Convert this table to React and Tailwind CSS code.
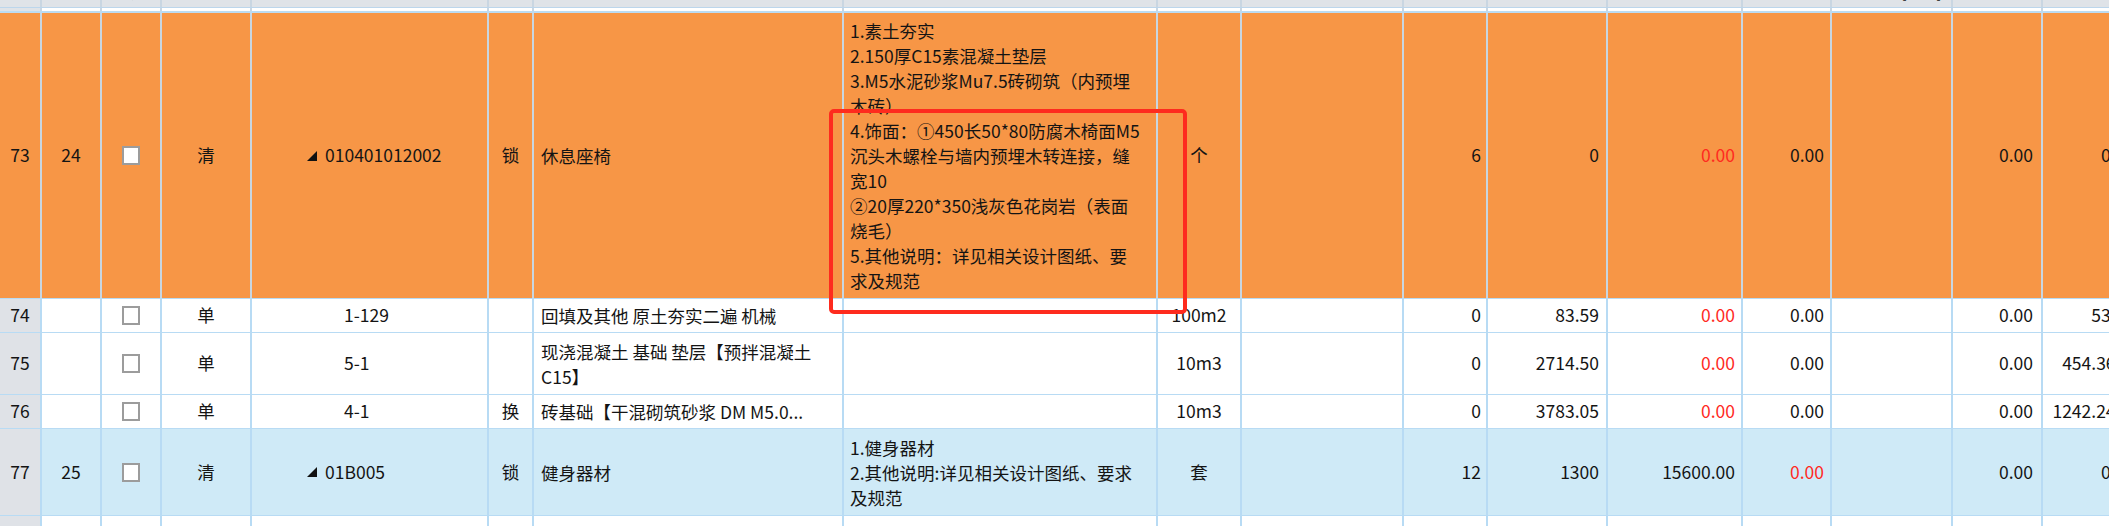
import React from 'react';

const GRID =
  'grid grid-cols-[42px_60px_60px_90px_237px_45px_310px_314px_84px_162px_84px_120px_135px_89px_121px_90px_100px]';

const FONT = { fontFamily: '"Noto Sans CJK SC", "Noto Sans", sans-serif' };

const headers = [
  '', '序号', '锁定', '类别', '编码', '', '名称', '项目特征', '单位', '工程量表达式',
  '工程量', '单价', '合价', '综合单价', '取费专业[费率]', '综合合价', '人工费',
];

const Triangle = () => (
  <svg width="10" height="10" viewBox="0 0 10 10" className="mr-2 shrink-0">
    <polygon points="10,0 10,10 0,10" fill="#111" />
  </svg>
);

const Checkbox = () => (
  <div className="w-[18px] h-[19px] border-2 border-[#9c9c9c] bg-white" />
);

const Lines = ({ lines }) => (
  <div className="flex flex-col">
    {lines.map((l, i) => (
      <div key={i} className="whitespace-nowrap leading-[25px]">{l}</div>
    ))}
  </div>
);

const rows = [
  {
    no: '73', idx: '24', type: '清', code: '010401012002', parent: true, lock: '锁',
    name: ['休息座椅'],
    desc: [
      '1.素土夯实',
      '2.150厚C15素混凝土垫层',
      '3.M5水泥砂浆Mu7.5砖砌筑（内预埋',
      '木砖）',
      '4.饰面：①450长50*80防腐木椅面M5',
      '沉头木螺栓与墙内预埋木转连接，缝',
      '宽10',
      '②20厚220*350浅灰色花岗岩（表面',
      '烧毛）',
      '5.其他说明：详见相关设计图纸、要',
      '求及规范',
    ],
    unit: '个', qty: '6', price: '0', total: '0.00', totalRed: true, c13: '0.00', c13Red: false,
    c15: '0.00', c16: '0.00', h: 'h-[286px]', bg: 'bg-[#f79646]', noBg: 'bg-[#f79646]',
    line: 'border-[#c8d6e1]',
  },
  {
    no: '74', idx: '', type: '单', code: '1-129', parent: false, lock: '',
    name: ['回填及其他 原土夯实二遍 机械'], desc: [],
    unit: '100m2', qty: '0', price: '83.59', total: '0.00', totalRed: true, c13: '0.00',
    c15: '0.00', c16: '53.80', h: 'h-[34px]', bg: 'bg-white', noBg: 'bg-[#dfe2e7]',
    line: 'border-[#b8dbf4]',
  },
  {
    no: '75', idx: '', type: '单', code: '5-1', parent: false, lock: '',
    name: ['现浇混凝土 基础 垫层【预拌混凝土', 'C15】'], desc: [],
    unit: '10m3', qty: '0', price: '2714.50', total: '0.00', totalRed: true, c13: '0.00',
    c15: '0.00', c16: '454.3600', h: 'h-[62px]', bg: 'bg-white', noBg: 'bg-[#dfe2e7]',
    line: 'border-[#b8dbf4]',
  },
  {
    no: '76', idx: '', type: '单', code: '4-1', parent: false, lock: '换',
    name: ['砖基础【干混砌筑砂浆 DM M5.0...'], desc: [],
    unit: '10m3', qty: '0', price: '3783.05', total: '0.00', totalRed: true, c13: '0.00',
    c15: '0.00', c16: '1242.2400', h: 'h-[34px]', bg: 'bg-white', noBg: 'bg-[#dfe2e7]',
    line: 'border-[#b8dbf4]',
  },
  {
    no: '77', idx: '25', type: '清', code: '01B005', parent: true, lock: '锁',
    name: ['健身器材'],
    desc: ['1.健身器材', '2.其他说明:详见相关设计图纸、要求', '及规范'],
    unit: '套', qty: '12', price: '1300', total: '15600.00', totalRed: false, c13: '0.00',
    c13Red: true, c15: '0.00', c16: '0.00', h: 'h-[87px]', bg: 'bg-[#cfeaf7]', noBg: 'bg-[#dfe2e7]',
    line: 'border-[#b8dbf4]',
  },
  {
    no: '78', idx: '', type: '单', code: '1-1', parent: false, lock: '',
    name: ['健身器材安装'], desc: [],
    unit: '个', qty: '', price: '', total: '', c13: '', c15: '', c16: '',
    h: 'h-[40px]', bg: 'bg-white', noBg: 'bg-[#dfe2e7]', line: 'border-[#b8dbf4]',
  },
];

const Cell = ({ children, className = '', line }) => (
  <div className={`flex items-center border-r-2 ${line} overflow-hidden ${className}`}>
    {children}
  </div>
);

const Row = ({ r }) => {
  const red = 'text-[#ff2a1f]';
  return (
    <div className={`${GRID} ${r.h} ${r.bg} border-b border-[#b8dbf4]`}>
      <Cell line={r.line} className={`justify-center ${r.noBg}`}>{r.no}</Cell>
      <Cell line={r.line} className="justify-center">{r.idx}</Cell>
      <Cell line={r.line} className="justify-center"><Checkbox /></Cell>
      <Cell line={r.line} className="justify-center">{r.type}</Cell>
      <Cell line={r.line} className={r.parent ? 'pl-[55px]' : 'pl-[92px]'}>
        {r.parent && <Triangle />}
        <span>{r.code}</span>
      </Cell>
      <Cell line={r.line} className="justify-center">{r.lock}</Cell>
      <Cell line={r.line} className="pl-[7px]"><Lines lines={r.name} /></Cell>
      <Cell line={r.line} className="pl-[6px]"><Lines lines={r.desc} /></Cell>
      <Cell line={r.line} className="justify-center">{r.unit}</Cell>
      <Cell line={r.line} />
      <Cell line={r.line} className="justify-end pr-[5px]">{r.qty}</Cell>
      <Cell line={r.line} className="justify-end pr-[7px]">{r.price}</Cell>
      <Cell line={r.line} className={`justify-end pr-[6px] ${r.totalRed ? red : ''}`}>{r.total}</Cell>
      <Cell line={r.line} className={`justify-end pr-[6px] ${r.c13Red ? red : ''}`}>{r.c13}</Cell>
      <Cell line={r.line} />
      <Cell line={r.line} className="justify-end pr-[8px]">{r.c15}</Cell>
      <Cell line={r.line} className="justify-end pr-[6px]">{r.c16}</Cell>
    </div>
  );
};

export default function App() {
  return (
    <div
      className="relative w-[2109px] h-[526px] overflow-hidden bg-white text-[17.5px] text-[#141414]"
      style={FONT}
    >
      {/* header, mostly scrolled out of view */}
      <div className={`${GRID} h-[8px] bg-[#dfe3e8] border-b border-[#bcd6ec]`}>
        {headers.map((h, i) => (
          <div key={i} className="flex items-start justify-center border-r-2 border-[#c9d6e2] overflow-hidden">
            <span className="text-[15px] leading-[16px] -mt-[16px] whitespace-nowrap">{h}</span>
          </div>
        ))}
      </div>
      {/* filter strip */}
      <div className={`${GRID} h-[5px] bg-white border-b-2 border-[#bcdcf2]`}>
        {headers.map((_, i) => (
          <div key={i} className={`border-r-2 border-[#c9d6e2] ${i === 0 ? 'bg-[#dfe3e8]' : ''}`} />
        ))}
      </div>

      {rows.map((r) => (
        <Row key={r.no} r={r} />
      ))}

      {/* red highlight box drawn over the grid */}
      <div className="absolute left-[829px] top-[109px] w-[358px] h-[205px] border-4 border-[#fe2b1e] rounded-[5px] pointer-events-none" />
    </div>
  );
}
